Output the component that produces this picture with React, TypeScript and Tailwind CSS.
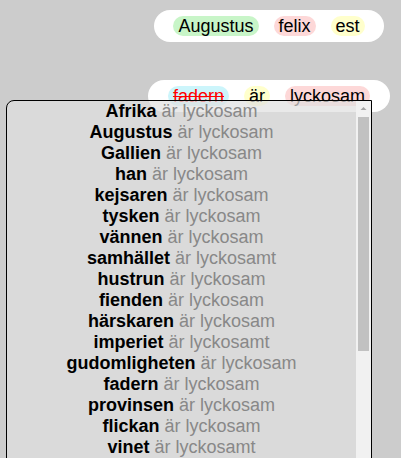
const TOP_WORDS = [
  { text: "Augustus", bg: "bg-[#c8f5c8]" },
  { text: "felix", bg: "bg-[#fdd8d8]" },
  { text: "est", bg: "bg-[#ffffcc]" },
];

const OPTIONS: [string, string][] = [
  ["Afrika", "lyckosam"],
  ["Augustus", "lyckosam"],
  ["Gallien", "lyckosam"],
  ["han", "lyckosam"],
  ["kejsaren", "lyckosam"],
  ["tysken", "lyckosam"],
  ["vännen", "lyckosam"],
  ["samhället", "lyckosamt"],
  ["hustrun", "lyckosam"],
  ["fienden", "lyckosam"],
  ["härskaren", "lyckosam"],
  ["imperiet", "lyckosamt"],
  ["gudomligheten", "lyckosam"],
  ["fadern", "lyckosam"],
  ["provinsen", "lyckosam"],
  ["flickan", "lyckosam"],
  ["vinet", "lyckosamt"],
  ["kvinnan", "lyckosam"],
  ["landet", "lyckosamt"],
];

function Chip({ bg, children, className = "" }: { bg: string; children: React.ReactNode; className?: string }) {
  return (
    <span className={`rounded-full px-[5px] text-[18px] leading-[20px] ${bg} ${className}`}>
      {children}
    </span>
  );
}

// headless chrome hides native scrollbars, so the classic one is drawn here
function Scrollbar() {
  return (
    <div className="flex w-[15px] shrink-0 flex-col items-center bg-[#f1f1f1]">
      <svg width="15" height="15" viewBox="0 0 15 15" aria-hidden>
        <path d="M4.5 9 L7.5 6 L10.5 9 Z" fill="#a3a3a3" />
      </svg>
      <div className="mt-px h-[234px] w-[11px] bg-[#c1c1c1]" />
    </div>
  );
}

export default function App() {
  return (
    <div className="relative h-[458px] w-[401px] overflow-hidden bg-[#cccccc] font-['Liberation_Sans',Arial,sans-serif] text-black">
      <div className="flex flex-col items-center gap-[38px] pl-[137px] pt-[10px]">
        <div className="flex items-center gap-[15px] rounded-full bg-white px-[19px] py-[6px]">
          {TOP_WORDS.map((w) => (
            <Chip key={w.text} bg={w.bg}>
              {w.text}
            </Chip>
          ))}
        </div>
        <div className="flex items-center gap-[15px] rounded-full bg-white px-[20px] py-[6px]">
          <Chip bg="bg-[#ccf5fb]" className="text-[#ff0000] line-through">
            fadern
          </Chip>
          <Chip bg="bg-[#ffffcc]">är</Chip>
          <Chip bg="bg-[#fdd8d8]">lyckosam</Chip>
        </div>
      </div>

      {/* dropdown of options, laid over the sentence pills */}
      <div className="absolute left-[6px] top-[100px] flex h-[402px] w-[366px] overflow-hidden rounded-tl-[8px] border border-black bg-[rgba(224,224,224,0.7)]">
        <div className="min-w-0 flex-1">
          {OPTIONS.map(([noun, adj]) => (
            <div key={noun} className="whitespace-nowrap text-center text-[18px] leading-[21px]">
              <span className="font-bold text-black">{noun}</span>{" "}
              <span className="text-[#888888]">är {adj}</span>
            </div>
          ))}
        </div>
        <Scrollbar />
      </div>
    </div>
  );
}
